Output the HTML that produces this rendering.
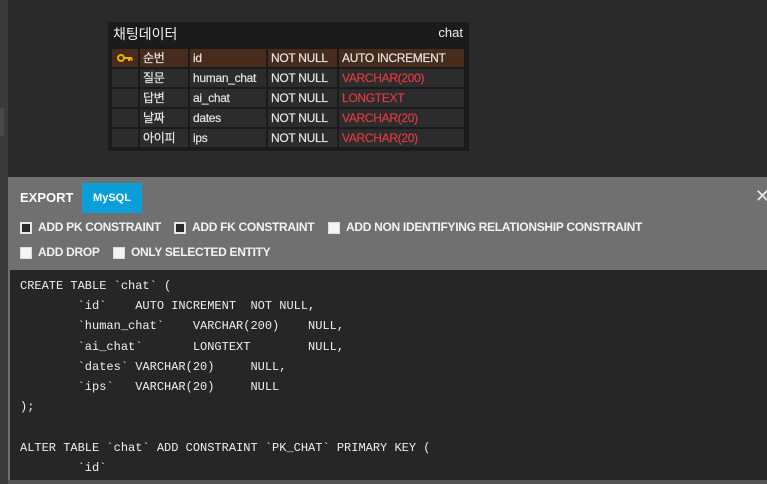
<!DOCTYPE html>
<html><head><meta charset="utf-8"><style>
*{margin:0;padding:0;box-sizing:border-box}
body{width:767px;height:484px;overflow:hidden;background:#2a2a2a;position:relative;font-family:"Liberation Sans","Noto Sans CJK KR",sans-serif}
.ls{position:absolute;left:0;top:0;width:8px;height:484px;background:#3b3b3b}
.lh{position:absolute;left:0;top:108px;width:4px;height:28px;background:#4a4a4a;border-radius:0 2px 2px 0}
.tb{position:absolute;left:108px;top:22px;width:361px;height:129px;background:#1b1b1b}
.tt{position:absolute;left:5px;top:2px;color:#f0f0f0;font-size:14px}
.tn{position:absolute;right:6px;top:3px;color:#f0f0f0;font-size:13px}
.c{position:absolute;height:18px;background:#2c2c2c;color:#e4e4e4;font-size:12px;line-height:18px;padding-left:3px;white-space:nowrap;letter-spacing:-0.3px;-webkit-text-stroke:0.2px}
.r1{background:#472c1c}
.red{color:#e03a42}
.pn{position:absolute;left:8px;top:177px;width:759px;height:307px;background:#707070}
.ex{position:absolute;left:12px;top:13px;color:#fff;font-weight:bold;font-size:13px}
.my{position:absolute;left:74px;top:6px;width:60px;height:30px;background:#0b9fd9;border-radius:2px;color:#fff;font-weight:bold;font-size:11px;text-align:center;line-height:30px}
.x{position:absolute;right:-3px;top:10px;color:#e8e8e8;font-size:18px;line-height:18px}
.cb{position:absolute;width:12px;height:12px;background:#f4f4f4;border:1px solid #ddd}
.cb.d{background:#2a2a2a;border:2px solid #e6e6e6}
.lb{position:absolute;color:#f2f2f2;font-weight:bold;font-size:12px;letter-spacing:-0.3px;white-space:nowrap}
.code{position:absolute;left:10px;top:270px;width:757px;height:210px;background:#262626;color:#eee;font-family:"Liberation Mono",monospace;font-size:12px;line-height:20.2px;white-space:pre;tab-size:8;-moz-tab-size:8;padding:6px 0 0 10px;overflow:hidden}
.bt{position:absolute;left:8px;top:480px;width:759px;height:4px;background:#555}
</style></head><body>
<div class="ls"></div><div class="lh"></div>
<div class="tb">
<div class="tt">채팅데이터</div><div class="tn">chat</div>
</div>
<div class="c r1" style="left:112px;top:49px;width:26px;padding:0"><svg width="26" height="18"><circle cx="9" cy="9" r="3" fill="none" stroke="#e8b400" stroke-width="2"/><path d="M12 9h8M17 9v3M19.5 9v2.5" stroke="#e8b400" stroke-width="2" fill="none"/></svg></div>
<div class="c r1" style="left:140px;top:49px;width:48px">순번</div>
<div class="c r1" style="left:190px;top:49px;width:76px">id</div>
<div class="c r1" style="left:268px;top:49px;width:69px">NOT NULL</div>
<div class="c r1" style="left:339px;top:49px;width:125px">AUTO INCREMENT</div>

<div class="c" style="left:112px;top:69px;width:26px"></div>
<div class="c" style="left:140px;top:69px;width:48px">질문</div>
<div class="c" style="left:190px;top:69px;width:76px">human_chat</div>
<div class="c" style="left:268px;top:69px;width:69px">NOT NULL</div>
<div class="c red" style="left:339px;top:69px;width:125px">VARCHAR(200)</div>

<div class="c" style="left:112px;top:89px;width:26px"></div>
<div class="c" style="left:140px;top:89px;width:48px">답변</div>
<div class="c" style="left:190px;top:89px;width:76px">ai_chat</div>
<div class="c" style="left:268px;top:89px;width:69px">NOT NULL</div>
<div class="c red" style="left:339px;top:89px;width:125px">LONGTEXT</div>

<div class="c" style="left:112px;top:109px;width:26px"></div>
<div class="c" style="left:140px;top:109px;width:48px">날짜</div>
<div class="c" style="left:190px;top:109px;width:76px">dates</div>
<div class="c" style="left:268px;top:109px;width:69px">NOT NULL</div>
<div class="c red" style="left:339px;top:109px;width:125px">VARCHAR(20)</div>

<div class="c" style="left:112px;top:129px;width:26px"></div>
<div class="c" style="left:140px;top:129px;width:48px">아이피</div>
<div class="c" style="left:190px;top:129px;width:76px">ips</div>
<div class="c" style="left:268px;top:129px;width:69px">NOT NULL</div>
<div class="c red" style="left:339px;top:129px;width:125px">VARCHAR(20)</div>

<div class="pn">
<div class="ex">EXPORT</div>
<div class="my">MySQL</div>
<div class="x">✕</div>
<div class="cb d" style="left:12px;top:45px"></div><div class="lb" style="left:30px;top:43px">ADD PK CONSTRAINT</div>
<div class="cb d" style="left:166px;top:45px"></div><div class="lb" style="left:184px;top:43px">ADD FK CONSTRAINT</div>
<div class="cb" style="left:320px;top:45px"></div><div class="lb" style="left:338px;top:43px">ADD NON IDENTIFYING RELATIONSHIP CONSTRAINT</div>
<div class="cb" style="left:12px;top:70px"></div><div class="lb" style="left:30px;top:68px">ADD DROP</div>
<div class="cb" style="left:105px;top:70px"></div><div class="lb" style="left:123px;top:68px">ONLY SELECTED ENTITY</div>
</div>
<div class="code">CREATE TABLE `chat` (
	`id`	AUTO INCREMENT	NOT NULL,
	`human_chat`	VARCHAR(200)	NULL,
	`ai_chat`	LONGTEXT	NULL,
	`dates` VARCHAR(20)	NULL,
	`ips`	VARCHAR(20)	NULL
);

ALTER TABLE `chat` ADD CONSTRAINT `PK_CHAT` PRIMARY KEY (
	`id`
</div>
<div class="bt"></div>
</body></html>
